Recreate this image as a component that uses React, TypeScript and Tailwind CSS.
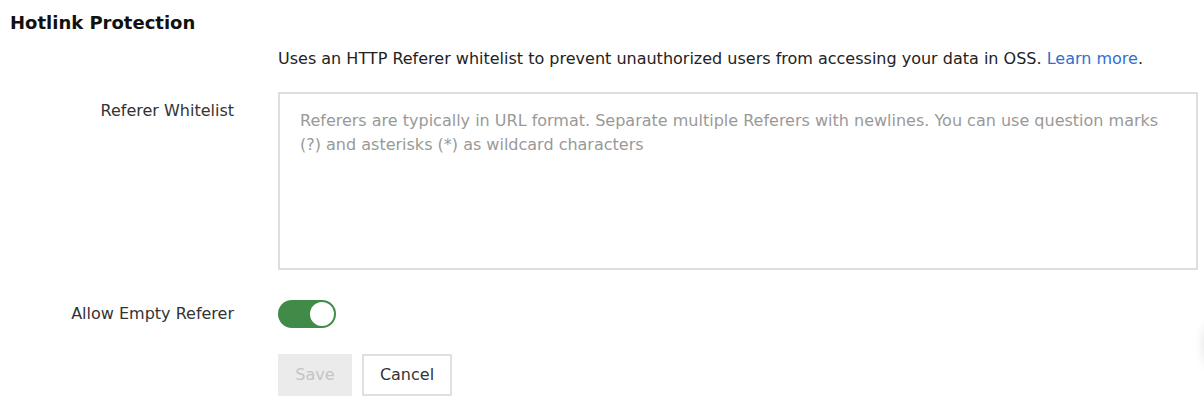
import { useState } from "react";

const font = { fontFamily: '"DejaVu Sans", "Noto Sans", Arial, sans-serif' };

function Toggle({ on, onChange }: { on: boolean; onChange: (v: boolean) => void }) {
  return (
    <button
      type="button"
      role="switch"
      aria-checked={on}
      onClick={() => onChange(!on)}
      className={
        on
          ? "relative h-[28px] w-[58px] rounded-full bg-[#3f8b47] transition"
          : "relative h-[28px] w-[58px] rounded-full bg-[#cfcfcf] transition"
      }
    >
      <span
        className={
          on
            ? "absolute top-[2px] left-[32px] h-[24px] w-[24px] rounded-full bg-white"
            : "absolute top-[2px] left-[2px] h-[24px] w-[24px] rounded-full bg-white"
        }
      />
    </button>
  );
}

export default function App() {
  const [allowEmpty, setAllowEmpty] = useState(true);
  const [value, setValue] = useState("");

  return (
    <div className="relative min-h-[410px] overflow-hidden bg-white text-[16px] text-[#333]" style={font}>
      <h2 className="pl-[10px] pt-[11px] text-[18px] leading-[24px] font-semibold text-[#111]">Hotlink Protection</h2>

      <div className="mt-[12px] grid grid-cols-[234px_1fr] gap-x-[44px] pr-[6px]">
        <div />
        <p className="text-[16px] leading-[24px] text-[#222]">
          Uses an HTTP Referer whitelist to prevent unauthorized users from accessing your data in OSS.{" "}
          <a href="#" className="text-[#2f6fcf]">
            Learn more
          </a>
          .
        </p>

        <label className="mt-[21px] pt-[7px] text-right text-[16px] leading-[24px] text-[#333]">Referer Whitelist</label>
        <textarea
          value={value}
          onChange={(e) => setValue(e.target.value)}
          placeholder={
            "Referers are typically in URL format. Separate multiple Referers with newlines. You can use question marks\n(?) and asterisks (*) as wildcard characters"
          }
          className="mt-[21px] h-[178px] w-full resize-none border-2 border-[#dedede] px-[20px] pt-[15px] pb-[13px] text-[16px] leading-[24px] text-[#333] outline-none placeholder:text-[#999]"
        />

        <label className="mt-[32px] text-right text-[16px] leading-[24px] text-[#333]">Allow Empty Referer</label>
        <div className="mt-[30px] flex items-start">
          <Toggle on={allowEmpty} onChange={setAllowEmpty} />
        </div>

        <div />
        <div className="mt-[26px] flex gap-[10px]">
          <button
            type="button"
            disabled
            className="h-[42px] w-[74px] bg-[#ebebeb] text-[16px] text-[#c4c4c4]"
          >
            Save
          </button>
          <button
            type="button"
            className="h-[42px] w-[90px] border-2 border-[#e0e0e0] bg-white text-[16px] text-[#333]"
          >
            Cancel
          </button>
        </div>
      </div>

      <div className="absolute top-[320px] right-[-40px] h-[50px] w-[40px] rounded-full shadow-[0_0_12px_rgba(0,0,0,0.12)]" />
    </div>
  );
}
